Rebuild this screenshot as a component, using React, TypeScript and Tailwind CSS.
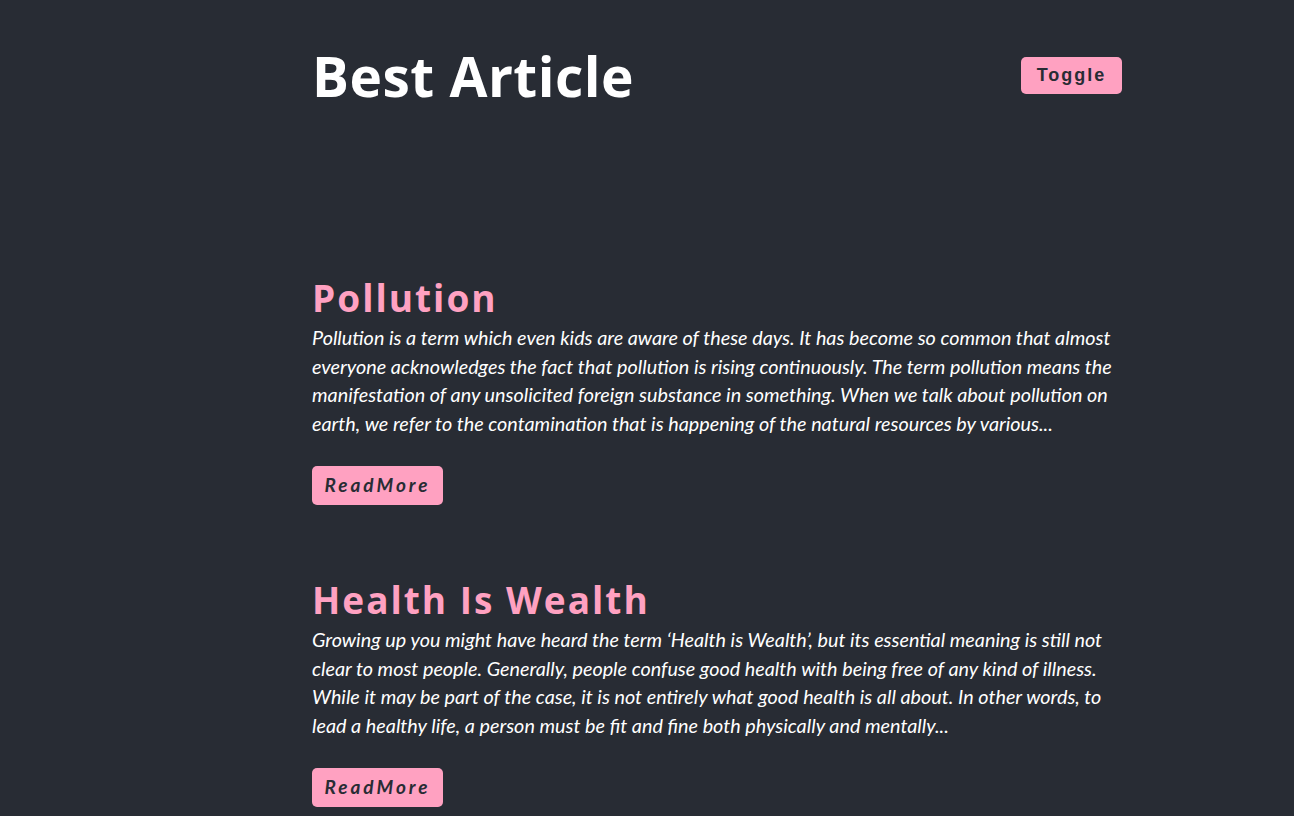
import React, { useState } from 'react';

type Article = {
  title: string;
  body: string;
};

const articles: Article[] = [
  {
    title: 'Pollution',
    body: 'Pollution is a term which even kids are aware of these days. It has become so common that almost everyone acknowledges the fact that pollution is rising continuously. The term pollution means the manifestation of any unsolicited foreign substance in something. When we talk about pollution on earth, we refer to the contamination that is happening of the natural resources by various...',
  },
  {
    title: 'Health Is Wealth',
    body: 'Growing up you might have heard the term \u2018Health is Wealth\u2019, but its essential meaning is still not clear to most people. Generally, people confuse good health with being free of any kind of illness. While it may be part of the case, it is not entirely what good health is all about. In other words, to lead a healthy life, a person must be fit and fine both physically and mentally...',
  },
];

const App: React.FC = () => {
  const [dark, setDark] = useState(true);

  return (
    <div
      className={`min-h-screen ${dark ? 'bg-[#282c34] text-white' : 'bg-white text-[#282c34]'} font-['Lato','Open_Sans',sans-serif]`}
    >
      <div className="ml-[312px] w-[810px] pt-[44px]">
        <header className="flex items-start justify-between">
          <h1 className="text-[55px] font-bold leading-[64px] tracking-[0.5px] font-['Open_Sans',sans-serif]">
            Best Article
          </h1>
          <button
            onClick={() => setDark(!dark)}
            className="mt-[13px] h-[37px] w-[101px] rounded-[5px] bg-[#ffa1c1] text-[18px] font-bold tracking-[2px] text-[#282c34] font-['Liberation_Sans',Arial,sans-serif]"
          >
            Toggle
          </button>
        </header>

        <main className="mt-[165px]">
          {articles.map((a) => (
            <article key={a.title} className="mb-[70px]">
              <h2 className="text-[37px] font-bold leading-[50px] tracking-[2px] text-[#ffa1c1] font-['Open_Sans',sans-serif]">
                {a.title}
              </h2>
              <p className="text-[19.8px] italic leading-[28.5px]">{a.body}</p>
              <button className="mt-[29px] h-[39px] w-[131px] rounded-[5px] bg-[#ffa1c1] text-[19px] font-bold italic tracking-[3px] text-[#282c34]">
                ReadMore
              </button>
            </article>
          ))}
        </main>
      </div>
    </div>
  );
};

export default App;
